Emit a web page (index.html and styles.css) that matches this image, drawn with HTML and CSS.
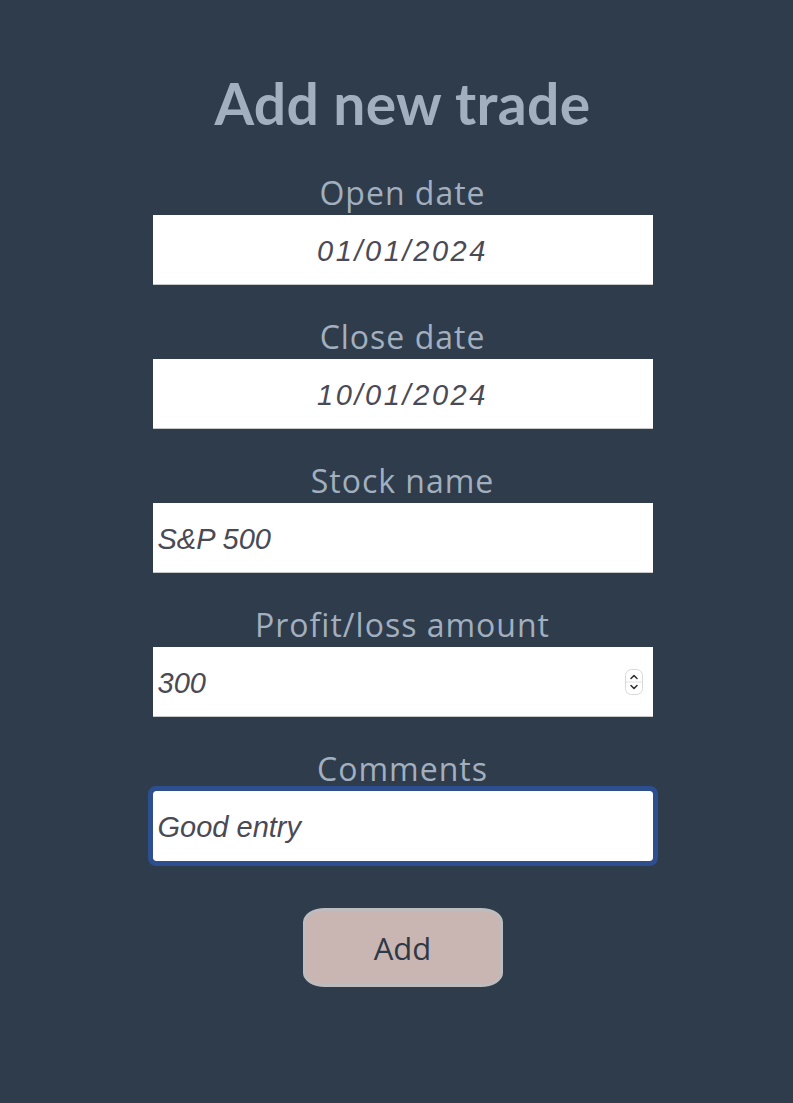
FILE: index.html
```html
<!DOCTYPE html>
<html>
<head>
<meta charset="utf-8">
<link rel="stylesheet" href="styles.css">
</head>
<body>
<main class="page">
  <h1 class="title">Add new trade</h1>
  <form class="form">
    <div class="field">
      <label class="label">Open date</label>
      <input class="input center" type="text" value="01/01/2024">
    </div>
    <div class="field">
      <label class="label">Close date</label>
      <input class="input center" type="text" value="10/01/2024">
    </div>
    <div class="field">
      <label class="label">Stock name</label>
      <input class="input" type="text" value="S&amp;P 500">
    </div>
    <div class="field">
      <label class="label">Profit/loss amount</label>
      <div class="input-wrap">
        <input class="input" type="text" value="300">
        <span class="spinner">
          <svg width="18" height="26" viewBox="0 0 18 26">
            <rect x="0.5" y="0.5" width="17" height="25" rx="6" fill="#fff" stroke="#d8d8d8"/>
            <line x1="1" y1="13" x2="17" y2="13" stroke="#e2e2e2"/>
            <path d="M6 9.5 L9 6.5 L12 9.5" fill="none" stroke="#333" stroke-width="1.6" stroke-linecap="round" stroke-linejoin="round"/>
            <path d="M6 16.5 L9 19.5 L12 16.5" fill="none" stroke="#333" stroke-width="1.6" stroke-linecap="round" stroke-linejoin="round"/>
          </svg>
        </span>
      </div>
    </div>
    <div class="field">
      <label class="label">Comments</label>
      <input class="input focused" type="text" value="Good entry">
    </div>
    <button class="btn" type="button">Add</button>
  </form>
</main>
</body>
</html>
```
FILE: styles.css
```css
html, body {
  margin: 0;
  padding: 0;
  background: #2f3c4b;
}
.page {
  width: 793px;
  min-height: 1103px;
  display: flex;
  flex-direction: column;
  align-items: center;
  padding-top: 72px;
  padding-left: 12px;
  box-sizing: border-box;
}
.title {
  margin: 0;
  font-family: Lato, "Open Sans", sans-serif;
  font-weight: 700;
  font-size: 57px;
  line-height: 62px;
  color: #a2afbf;
  letter-spacing: 0.3px;
}
.form {
  display: flex;
  flex-direction: column;
  align-items: center;
  margin-top: 39px;
}
.field {
  display: flex;
  flex-direction: column;
  align-items: center;
  margin-bottom: 32px;
}
.label {
  font-family: "Open Sans", Lato, sans-serif;
  font-size: 32px;
  line-height: 40px;
  color: #a2afbf;
  letter-spacing: 1px;
  margin-bottom: 2px;
}
.input-wrap {
  position: relative;
}
.input {
  width: 500px;
  height: 70px;
  box-sizing: border-box;
  border: none;
  border-bottom: 1px solid #c8c8c8;
  background: #fff;
  font-family: "Liberation Sans", Arial, sans-serif;
  font-style: italic;
  font-size: 29px;
  color: #4a4a55;
  padding: 3px 5px 0;
  margin: 0;
  outline: none;
  display: block;
  border-radius: 0;
}
.center {
  text-align: center;
  letter-spacing: 2.6px;
}
.focused {
  border-bottom: none;
  border-radius: 3px;
  outline: 5px solid #2d4e8f;
  outline-offset: 0;
}
.spinner {
  position: absolute;
  right: 10px;
  top: 22px;
  display: block;
  line-height: 0;
}
.btn {
  margin-top: 15px;
  width: 200px;
  height: 79px;
  background: #c9b6b3;
  border: 3px solid #bdbcbe;
  border-radius: 22px / 14px;
  font-family: "Open Sans", Lato, sans-serif;
  font-size: 31px;
  color: #2f3846;
  cursor: pointer;
}
```
